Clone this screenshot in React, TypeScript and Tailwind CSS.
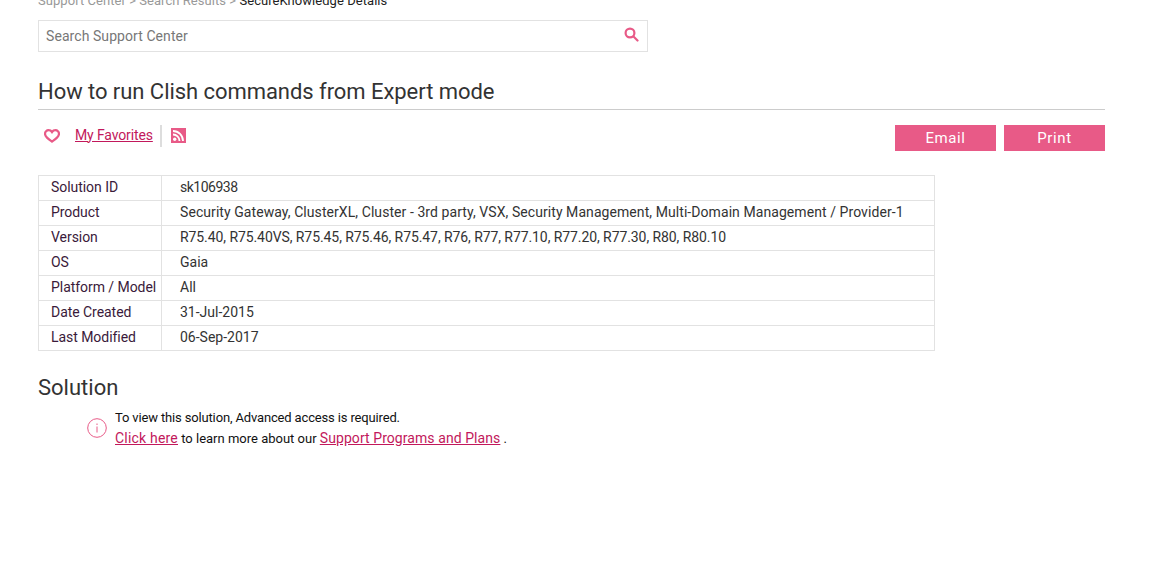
const rows = [
  { label: "Solution ID", value: "sk106938", track: "tracking-[-0.5px]" },
  { label: "Product", value: "Security Gateway, ClusterXL, Cluster - 3rd party, VSX, Security Management, Multi-Domain Management / Provider-1", track: "tracking-[0.07px]" },
  { label: "Version", value: "R75.40, R75.40VS, R75.45, R75.46, R75.47, R76, R77, R77.10, R77.20, R77.30, R80, R80.10", track: "tracking-[-0.08px]" },
  { label: "OS", value: "Gaia", track: "tracking-[0px]" },
  { label: "Platform / Model", value: "All", track: "tracking-[0px]" },
  { label: "Date Created", value: "31-Jul-2015", track: "tracking-[0px]" },
  { label: "Last Modified", value: "06-Sep-2017", track: "tracking-[0px]" },
];

export default function App() {
  return (
    <div className="h-[578px] overflow-hidden bg-white pl-[38px] pr-[70px] font-['Roboto',sans-serif] text-[#333]">
      <div className="mt-[-7px] h-[20px] text-[13px] leading-[16px] tracking-[0.05px] text-[#999]">
        Support Center &gt; Search Results &gt; <span className="text-[#222]">SecureKnowledge Details</span>
      </div>
      <div className="mt-[7px] flex h-[32px] w-[610px] items-center justify-between border border-[#e2e2e2] pl-[7px] pr-[8px]">
        <span className="text-[14px] tracking-[0.07px] text-[#777]">Search Support Center</span>
        <svg className="mt-[-3px]" width="15" height="15" viewBox="0 0 15 15" fill="none" stroke="#e85a87" strokeWidth="2.2" strokeLinecap="round">
          <circle cx="6" cy="6" r="4.4" />
          <path d="M9.5 9.5L13.5 13.5" />
        </svg>
      </div>
      <h1 className="mt-[24px] h-[34px] border-b border-[#ccc] pt-[1px] text-[22px] font-normal leading-[30px] tracking-[-0.05px] text-[#333]">
        How to run Clish commands from Expert mode
      </h1>
      <div className="mt-[15px] flex h-[26px] items-start justify-between">
        <div className="flex items-center">
          <svg className="ml-[6px]" width="16" height="14" viewBox="0 0 16 14" fill="none" stroke="#e85a87" strokeWidth="2.2">
            <path d="M8 12.6C4 10 1 8 1 4.8 1 2.6 2.7 1.2 4.5 1.2 6 1.2 7.3 2 8 3 8.7 2 10 1.2 11.500 1.200 13.300 1.200 15 2.600 15 4.800 15 8 12 10 8 12.600Z" />
          </svg>
          <a className="ml-[15px] mt-[-2px] text-[14px] tracking-[-0.13px] text-[#c2185b] underline">My Favorites</a>
          <div className="ml-[7px] h-[22px] w-[2px] bg-[#ddd]" />
          <svg className="ml-[9px] mt-[-2px]" width="15" height="15" viewBox="0 0 15 15">
            <rect width="15" height="15" fill="#e85a87" />
            <circle cx="3.700" cy="11.300" r="1.700" fill="#fff" />
            <path d="M2 6.500A6.500 6.500 0 0 1 8.500 13M2 3A10 10 0 0 1 12 13" fill="none" stroke="#fff" strokeWidth="1.800" />
          </svg>
        </div>
        <div className="flex gap-[8px]">
          <button className="h-[26px] w-[101px] bg-[#e85a87] text-[15px] tracking-[0.6px] text-white">Email</button>
          <button className="h-[26px] w-[101px] bg-[#e85a87] text-[15px] tracking-[0.6px] text-white">Print</button>
        </div>
      </div>
      <table className="mt-[24px] w-[897px] border-collapse text-[14px]">
        <tbody>
          {rows.map((row) => (
            <tr key={row.label} className="h-[25px]">
              <td className="w-[123px] whitespace-nowrap border border-[#e2e2e2] p-0 pb-[2px] pl-[12px] leading-[22px] tracking-[-0.05px] text-[#3a1a3a]">{row.label}</td>
              <td className={"border border-[#e2e2e2] p-0 pb-[2px] pl-[18px] leading-[22px] text-[#333] " + row.track}>{row.value}</td>
            </tr>
          ))}
        </tbody>
      </table>
      <h2 className="mt-[22px] text-[22px] font-normal leading-[30px] tracking-[0px] text-[#333]">Solution</h2>
      <div className="mt-[4px] flex items-center pl-[49px]">
        <svg width="20" height="20" viewBox="0 0 20 20" fill="none" stroke="#e85a87" strokeWidth="1">
          <circle cx="10" cy="10" r="9.300" />
          <path d="M10 8.500V14.500M10 5.500V7" />
        </svg>
        <div className="ml-[8px] text-[13px] leading-[21px] text-[#111]">
          <div className="tracking-[-0.15px]">To view this solution, Advanced access is required.</div>
          <div>
            <a className="text-[14px] tracking-[0.2px] text-[#c2185b] underline">Click here</a> to learn more about our{" "}
            <a className="text-[14px] tracking-[0.07px] text-[#c2185b] underline">Support Programs and Plans</a> .
          </div>
        </div>
      </div>
    </div>
  );
}
